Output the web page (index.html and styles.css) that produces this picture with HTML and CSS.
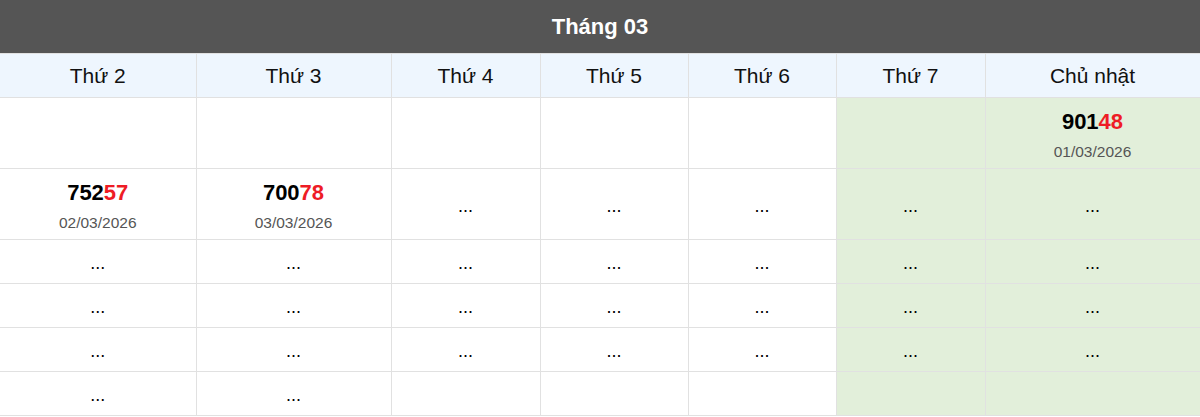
FILE: index.html
```html
<!DOCTYPE html>
<html lang="vi">
<head>
<meta charset="utf-8">
<title>Tháng 03</title>
<link rel="stylesheet" href="styles.css">
</head>
<body>
<div class="calendar">
  <div class="title">Tháng 03</div>
  <table class="grid">
    <colgroup>
      <col class="c-mon"><col class="c-tue"><col class="c-wed"><col class="c-thu"><col class="c-fri"><col class="c-sat"><col class="c-sun">
    </colgroup>
    <thead>
      <tr class="head">
        <th>Thứ 2</th><th>Thứ 3</th><th>Thứ 4</th><th>Thứ 5</th><th>Thứ 6</th><th>Thứ 7</th><th>Chủ nhật</th>
      </tr>
    </thead>
    <tbody>
      <tr class="tall">
        <td></td><td></td><td></td><td></td><td></td><td class="weekend"></td>
        <td class="weekend result"><div class="num">901<span class="hl">48</span></div><div class="date">01/03/2026</div></td>
      </tr>
      <tr class="tall">
        <td class="result"><div class="num">752<span class="hl">57</span></div><div class="date">02/03/2026</div></td>
        <td class="result"><div class="num">700<span class="hl">78</span></div><div class="date">03/03/2026</div></td>
        <td class="dots">...</td><td class="dots">...</td><td class="dots">...</td><td class="dots weekend">...</td><td class="dots weekend">...</td>
      </tr>
      <tr class="short">
        <td class="dots">...</td><td class="dots">...</td><td class="dots">...</td><td class="dots">...</td><td class="dots">...</td><td class="dots weekend">...</td><td class="dots weekend">...</td>
      </tr>
      <tr class="short">
        <td class="dots">...</td><td class="dots">...</td><td class="dots">...</td><td class="dots">...</td><td class="dots">...</td><td class="dots weekend">...</td><td class="dots weekend">...</td>
      </tr>
      <tr class="short">
        <td class="dots">...</td><td class="dots">...</td><td class="dots">...</td><td class="dots">...</td><td class="dots">...</td><td class="dots weekend">...</td><td class="dots weekend">...</td>
      </tr>
      <tr class="short">
        <td class="dots">...</td><td class="dots">...</td><td></td><td></td><td></td><td class="weekend"></td><td class="weekend"></td>
      </tr>
    </tbody>
  </table>
</div>
</body>
</html>
```
FILE: styles.css
```css
html, body {
  margin: 0;
  padding: 0;
  background: #fff;
  font-family: "Liberation Sans", Arial, sans-serif;
  color: #000;
}
.calendar {
  width: 1200px;
}
.title {
  height: 53px;
  background: #555555;
  color: #fff;
  font-weight: bold;
  font-size: 22px;
  display: flex;
  align-items: center;
  justify-content: center;
}
.grid {
  width: 1200px;
  border-collapse: collapse;
  table-layout: fixed;
}
.c-mon { width: 196px; }
.c-tue { width: 195px; }
.c-wed { width: 149px; }
.c-thu { width: 148px; }
.c-fri { width: 148px; }
.c-sat { width: 149px; }
.c-sun { width: 215px; }
.grid th, .grid td {
  border: 1px solid #e1e1e1;
  text-align: center;
  vertical-align: middle;
  padding: 0;
}
.grid th:first-child, .grid td:first-child {
  border-left: none;
}
.head {
  height: 44px;
}
.head th {
  background: #eef6fe;
  font-weight: normal;
  font-size: 21px;
  color: #111;
}
.tall {
  height: 71px;
}
.short {
  height: 44px;
}
.weekend {
  background: #e2efda;
}
.grid td.result {
  padding-top: 4px;
}
.grid td.dots {
  padding-top: 4px;
  font-size: 18px;
}
.num {
  font-weight: bold;
  font-size: 22px;
  line-height: 26px;
}
.hl {
  color: #ee1c25;
}
.date {
  margin-top: 7px;
  font-size: 15.5px;
  line-height: 20px;
  color: #555;
}
```
